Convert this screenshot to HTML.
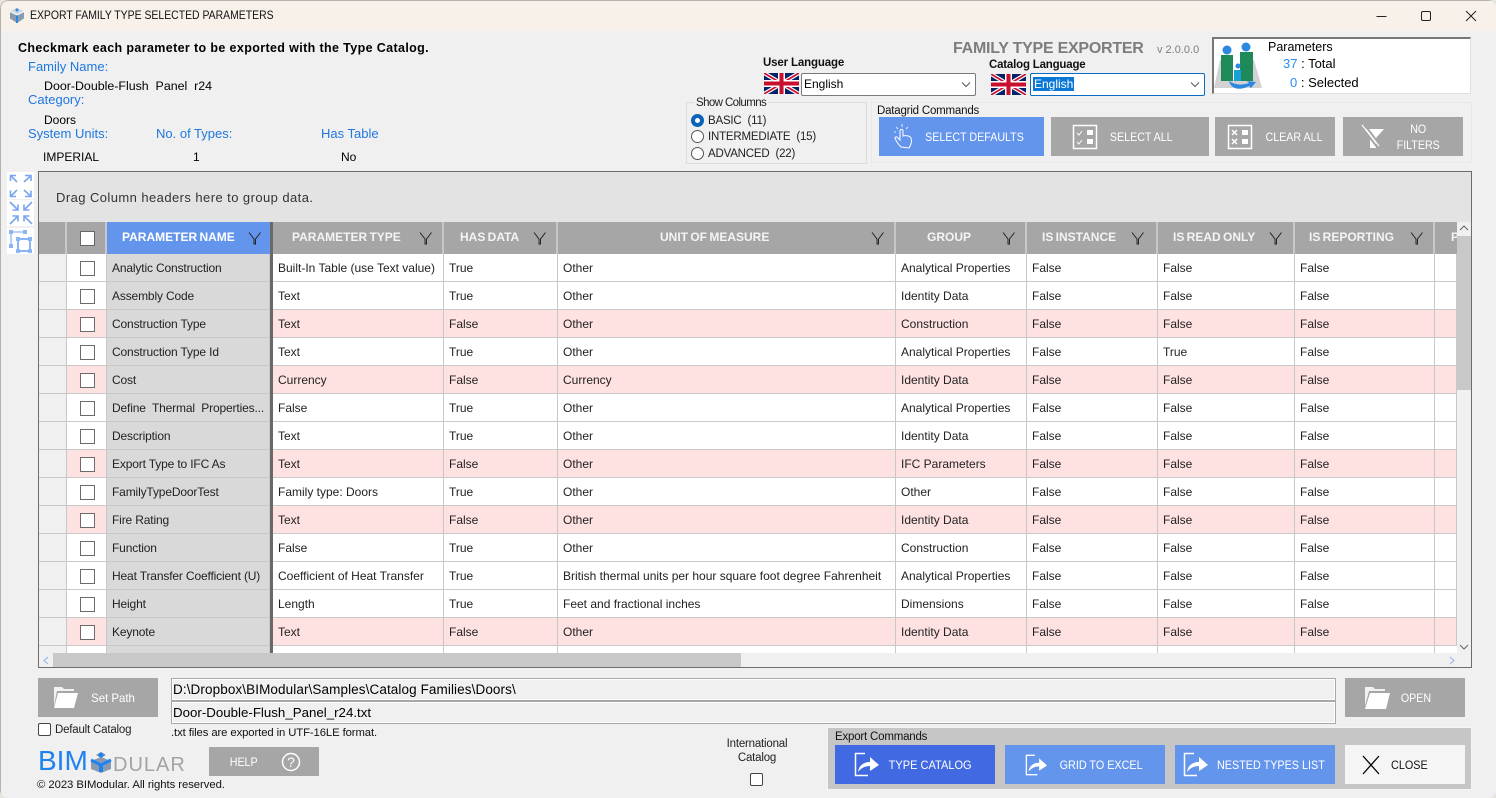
<!DOCTYPE html>
<html><head><meta charset="utf-8"><title>Export Family Type</title>
<style>
*{box-sizing:border-box}
html,body{margin:0;padding:0;width:1496px;height:798px;overflow:hidden;background:#e8e4df}
body{font-family:"Liberation Sans",sans-serif;font-size:12px;color:#000}
.a{position:absolute;white-space:nowrap}
#win{position:absolute;left:0;top:0;width:1496px;height:798px;background:#f0f0f0;border-radius:8px;overflow:hidden}
#win::after{content:"";position:absolute;left:0;top:0;width:1496px;height:798px;border:1px solid #b5b2ae;border-radius:8px;pointer-events:none}
#tb{position:absolute;left:0;top:0;width:1496px;height:31px;background:#f8f1ea}
.blue{color:#1e78e0;font-size:13px}
.btn{position:absolute;background:#a6a6a6;color:#fff;font-size:12px;display:flex;align-items:center;justify-content:center;text-align:center;line-height:16px}
.btn span{display:inline-block;transform:scaleX(.89);white-space:nowrap}
.btn svg{position:absolute}
.bl{background:#6495ed}
.row{position:absolute;left:39px;height:28px;width:1418px;border-bottom:1px solid #c8c8c8;background:#fff;font-size:12px;color:#222}
.row.p{background:#fee1e1}
.c{position:absolute;top:0;height:27px;line-height:29px;padding-left:5px;border-right:1px solid #c8c8c8;white-space:nowrap;overflow:hidden}
.i0{left:0;width:28px;background:#f0f0f0;padding:0}
.i1{left:28px;width:40px;padding:0}
.n{left:68px;width:163px;background:#d9d9d9;letter-spacing:-.15px}
.t{left:234px;width:171px}.d{left:405px;width:114px}.u{left:519px;width:338px}.g{left:857px;width:131px}.s{left:988px;width:131px}.r{left:1119px;width:137px}.e{left:1256px;width:140px}.x{left:1396px;width:22px}
.sep{position:absolute;left:231px;top:0;width:3px;height:28px;background:#696969}
.cb{position:absolute;left:13px;top:7px;width:15px;height:15px;border:1px solid #6b6b6b;background:#fff}
.h{position:absolute;top:222px;height:32px;background:#a6a6a6;color:#f4f4f4;font-weight:bold;font-size:12px;line-height:31px;text-align:center;border-right:2px solid #c8c8c8;word-spacing:-1px;overflow:hidden;white-space:nowrap}
.h svg{position:absolute;top:9px}
.field{position:absolute;left:171px;width:1165px;height:23px;border:1px solid #a8a8a8;background:#f0f0f0;font-size:13.500px;line-height:22px;padding-left:1px;box-shadow:inset 0 0 0 1px #fff}
.combo{position:absolute;height:23px;background:#fff;border:1px solid #7a7a7a;border-radius:2px;font-size:12px;line-height:21px;padding-left:2px}
.radio{position:absolute;left:691px;width:13px;height:13px;border:1px solid #555;border-radius:50%;background:#fff}
.small{font-size:11.500px;letter-spacing:-.2px}
</style></head><body>
<div id="win">
<div id="tb"></div>

<svg class="a" style="left:9px;top:8px" width="16" height="15" viewBox="0 0 16 15"><path d="M8 0l7 3.500v7L8 15l-7-4.500v-7z" fill="#8a9bb0"/><path d="M8 0l7 3.500L8 7 1 3.500z" fill="#cfd8e3"/><path d="M8 7v8" stroke="#2a88e0" stroke-width="2"/><path d="M1 3.500l7 3.500 7-3.500" fill="none" stroke="#fff"/><circle cx="8" cy="2" r="1.500" fill="#2a88e0"/></svg>
<div class="a" style="left:30px;top:9px;font-size:11.700px;color:#111;transform:scaleX(.893);transform-origin:left">EXPORT FAMILY TYPE SELECTED PARAMETERS</div>
<svg class="a" style="left:1370px;top:8px" width="110" height="16" viewBox="0 0 110 16" fill="none" stroke="#222" stroke-width="1"><path d="M6.500 8.500h10"/><rect x="51.500" y="3.500" width="9" height="9" rx="1.500"/><path d="M96 3l10 10M106 3L96 13"/></svg>

<div class="a" style="left:18px;top:41px;font-weight:bold;font-size:12.500px;letter-spacing:.37px">Checkmark each parameter to be exported with the Type Catalog.</div>
<div class="a blue" style="left:28px;top:59px">Family Name:</div>
<div class="a" style="left:44px;top:79px;font-size:12.400px">Door-Double-Flush&nbsp; Panel&nbsp; r24</div>
<div class="a blue" style="left:28px;top:92px">Category:</div>
<div class="a" style="left:44px;top:113px;font-size:12px">Doors</div>
<div class="a blue" style="left:28px;top:126px">System Units:</div>
<div class="a blue" style="left:156px;top:126px">No. of Types:</div>
<div class="a blue" style="left:321px;top:126px">Has Table</div>
<div class="a" style="left:43px;top:150px">IMPERIAL</div>
<div class="a" style="left:193px;top:150px">1</div>
<div class="a" style="left:341px;top:150px">No</div>

<div class="a" style="left:953px;top:40px;font-size:16px;font-weight:bold;color:#7d7d7d;letter-spacing:-.25px">FAMILY TYPE EXPORTER</div>
<div class="a" style="left:1157px;top:44px;font-size:11px;color:#7d7d7d">v 2.0.0.0</div>

<div class="a" style="left:763px;top:57px;font-weight:bold;font-size:11.500px;color:#111;letter-spacing:-.15px">User Language</div>
<div class="a" style="left:989px;top:59px;font-weight:bold;font-size:11.500px;color:#111;letter-spacing:-.2px">Catalog Language</div>
<svg class="a" style="left:764px;top:73px" width="35" height="21" viewBox="0 0 60 36"><rect width="60" height="36" fill="#012169"/><path d="M0 0l60 36M60 0L0 36" stroke="#fff" stroke-width="7"/><path d="M0 0l60 36M60 0L0 36" stroke="#c8102e" stroke-width="3"/><path d="M30 0v36M0 18h60" stroke="#fff" stroke-width="12"/><path d="M30 0v36M0 18h60" stroke="#c8102e" stroke-width="7"/></svg>
<svg class="a" style="left:991px;top:74px" width="35" height="21" viewBox="0 0 60 36"><rect width="60" height="36" fill="#012169"/><path d="M0 0l60 36M60 0L0 36" stroke="#fff" stroke-width="7"/><path d="M0 0l60 36M60 0L0 36" stroke="#c8102e" stroke-width="3"/><path d="M30 0v36M0 18h60" stroke="#fff" stroke-width="12"/><path d="M30 0v36M0 18h60" stroke="#c8102e" stroke-width="7"/></svg>
<div class="combo" style="left:801px;top:73px;width:175px">English<svg class="a" style="right:4px;top:8px" width="10" height="6" viewBox="0 0 10 6" fill="none" stroke="#555"><path d="M1 .5l4 4 4-4"/></svg></div>
<div class="combo" style="left:1030px;top:73px;width:175px;border-color:#0a6cc4"><span style="background:#0a78d7;color:#fff;padding:0 1px">English</span><svg class="a" style="right:4px;top:8px" width="10" height="6" viewBox="0 0 10 6" fill="none" stroke="#555"><path d="M1 .5l4 4 4-4"/></svg></div>

<div class="a" style="left:1212px;top:37px;width:259px;height:57px;background:#fff;border:1px solid #e0e0e0;border-top:2px solid #777;border-left:2px solid #777"></div>
<svg class="a" style="left:1213px;top:40px" width="50" height="52" viewBox="0 0 50 52"><path d="M1 48L7 20h34l8 28z" fill="#d2d2d2"/><rect x="8" y="15" width="12" height="26" fill="#1e8a5a"/><rect x="27" y="12" width="13" height="29" fill="#1e8a5a"/><circle cx="14" cy="10" r="4.500" fill="#2a88e0"/><circle cx="33" cy="7" r="4.500" fill="#2a88e0"/><path d="M20 20h7v20h-7z" fill="#fff"/><circle cx="25" cy="26" r="2.500" fill="#2a88e0"/><rect x="21" y="30" width="7" height="11" fill="#1aa0d8"/><path d="M16 41q9 6 20 2l-2-2 9 1-5 6-2-2q-10 5-16 1-3-2-4-6z" fill="#2a88e0"/></svg>
<div class="a" style="left:1268px;top:40px;font-size:12.500px">Parameters</div>
<div class="a" style="left:1283px;top:56px;font-size:13px"><span style="color:#2a8cf0">37</span> : Total</div>
<div class="a" style="left:1290px;top:75px;font-size:13px"><span style="color:#2a8cf0">0</span> : Selected</div>

<div class="a" style="left:686px;top:102px;width:181px;height:62px;border:1px solid #dcdcdc"></div>
<div class="a small" style="left:694px;top:97px;background:#f0f0f0;padding:0 2px;color:#222;letter-spacing:-.6px">Show Columns</div>
<div class="radio" style="top:114px;border:4px solid #0a63b8;background:#fff"></div>
<div class="radio" style="top:130px"></div>
<div class="radio" style="top:147px"></div>
<div class="a small" style="left:708px;top:115px;color:#222">BASIC&nbsp; (11)</div>
<div class="a small" style="left:708px;top:131px;color:#222">INTERMEDIATE&nbsp; (15)</div>
<div class="a small" style="left:708px;top:148px;color:#222">ADVANCED&nbsp; (22)</div>

<div class="a" style="left:871px;top:102px;width:601px;height:61px;border:1px solid #e8e8e8"></div>
<div class="a small" style="left:877px;top:105px;color:#111">Datagrid Commands</div>

<div class="btn bl" style="left:879px;top:117px;width:165px;height:39px"><span style="margin-left:26px">SELECT DEFAULTS</span>
<svg style="left:13px;top:6px" width="24" height="28" viewBox="0 0 24 28" fill="none" stroke="#fff" stroke-width="1"><path d="M9 24c-3-3-5-6-6-9 0-1 2-2 3 0l2 2V8c0-2 3-2 3 0v5c3-1 7 0 8 2 1 3 0 7-2 10z"/><path d="M6 6L4 4M10 4V1M14 6l2-2M4 9H2" opacity=".8"/></svg></div>
<div class="btn" style="left:1051px;top:117px;width:158px;height:39px"><span style="margin-left:22px">SELECT ALL</span>
<svg style="left:21px;top:7px" width="26" height="26" viewBox="0 0 26 26" fill="none" stroke="#fff"><rect x="1.500" y="1.500" width="23" height="23" stroke-width="1.500"/><rect x="15" y="6" width="6" height="5" fill="#fff" stroke="none"/><rect x="15" y="15" width="6" height="5" fill="#fff" stroke="none"/><path d="M5 9l2 2 3-4M5 18l2 2 3-4"/></svg></div>
<div class="btn" style="left:1215px;top:117px;width:120px;height:39px"><span style="margin-left:38px">CLEAR ALL</span>
<svg style="left:12px;top:7px" width="26" height="26" viewBox="0 0 26 26" fill="none" stroke="#fff"><rect x="1.500" y="1.500" width="23" height="23" stroke-width="1.500"/><rect x="15" y="6" width="6" height="5" fill="#fff" stroke="none"/><rect x="15" y="15" width="6" height="5" fill="#fff" stroke="none"/><path d="M5 6l5 5M10 6l-5 5M5 15l5 5M10 15l-5 5" stroke-width="1.500"/></svg></div>
<div class="btn" style="left:1343px;top:117px;width:120px;height:39px"><span style="margin-left:30px">NO<br>FILTERS</span>
<svg style="left:18px;top:7px" width="24" height="25" viewBox="0 0 24 25"><path d="M1 5h22l-8 9v10h-6V14z" fill="#fff"/><path d="M3 0l16 21M0 2l16 21" stroke="#a6a6a6" stroke-width="2"/><path d="M1 1l17 21" stroke="#fff" stroke-width="1.200"/></svg></div>

<div class="a" style="left:7px;top:172px;width:27px;height:27px;background:#fff"></div>
<div class="a" style="left:7px;top:200px;width:27px;height:26px;background:#fff"></div>
<div class="a" style="left:7px;top:228px;width:27px;height:26px;background:#fff"></div>
<svg class="a" style="left:9px;top:174px" width="24" height="24" viewBox="0 0 24 24" fill="none" stroke="#7aa5f0" stroke-width="1.600"><path d="M1.500 7V1.500H7M1.500 1.500L8 8M16 1.500h6v5.500M22 1.500L15 8M1.500 16.500v6H7M1.500 22.500L8 16M22 16.500v6h-6M22 22.500L15 16"/></svg>
<svg class="a" style="left:9px;top:201px" width="24" height="24" viewBox="0 0 24 24" fill="none" stroke="#7aa5f0" stroke-width="1.600"><path d="M1 1l8 8M9 3.500V9H3.500M23 1l-8 8M15 3.500V9h5.500M1 23l8-8M9 20.500V15H3.500M23 23l-8-8M15 20.500V15h5.500"/></svg>
<svg class="a" style="left:8px;top:229px" width="25" height="25" viewBox="0 0 25 25" fill="none" stroke="#8cb6f2" stroke-width="1.300"><rect x="10" y="10" width="12" height="12" stroke-width="2"/><path d="M3 3v15M3 3h14"/><g fill="#8cb6f2" stroke="none"><rect x="1" y="1" width="4" height="4"/><rect x="15" y="1" width="4" height="4"/><rect x="1" y="15" width="4" height="4"/><rect x="8" y="8" width="4" height="4"/><rect x="20" y="8" width="4" height="4"/><rect x="8" y="20" width="4" height="4"/><rect x="20" y="20" width="4" height="4"/></g></svg>

<!-- Grid -->
<div class="a" style="left:38px;top:171px;width:1434px;height:497px;background:#fff;border:1px solid #6d6d6d;overflow:hidden"></div>
<div class="a" style="left:39px;top:172px;width:1432px;height:50px;background:#e3e3e3"></div>
<div class="a" style="left:56px;top:190px;font-size:13px;color:#333;letter-spacing:.43px">Drag Column headers here to group data.</div>

<div class="h" style="left:39px;width:28px"></div>
<div class="h" style="left:67px;width:40px"><div style="position:absolute;left:13px;top:9px;width:15px;height:15px;background:#fff;border:1px solid #666"></div></div>
<div class="h" style="left:107px;width:163px;background:#6495ed;border:0;text-align:left;padding-left:15px;color:#fff">PARAMETER NAME<svg style="left:141px" width="14" height="14" viewBox="0 0 14 14" fill="none" stroke="#222"><path d="M1 1.500l5 6.500v5h1.500V8l5-6.500" /></svg></div>
<div class="a" style="left:270px;top:222px;width:3px;height:32px;background:#696969"></div>
<div class="h" style="left:273px;width:171px;text-align:left;padding-left:19px">PARAMETER TYPE<svg style="left:146px" width="14" height="14" viewBox="0 0 14 14" fill="none" stroke="#222"><path d="M1 1.500l5 6.500v5h1.500V8l5-6.500"/></svg></div>
<div class="h" style="left:444px;width:114px;text-align:left;padding-left:16px">HAS DATA<svg style="left:89px" width="14" height="14" viewBox="0 0 14 14" fill="none" stroke="#222"><path d="M1 1.500l5 6.500v5h1.500V8l5-6.500"/></svg></div>
<div class="h" style="left:558px;width:338px;text-align:left;padding-left:102px">UNIT OF MEASURE<svg style="left:313px" width="14" height="14" viewBox="0 0 14 14" fill="none" stroke="#222"><path d="M1 1.500l5 6.500v5h1.500V8l5-6.500"/></svg></div>
<div class="h" style="left:896px;width:131px;text-align:left;padding-left:31px">GROUP<svg style="left:106px" width="14" height="14" viewBox="0 0 14 14" fill="none" stroke="#222"><path d="M1 1.500l5 6.500v5h1.500V8l5-6.500"/></svg></div>
<div class="h" style="left:1027px;width:131px;text-align:left;padding-left:15px">IS INSTANCE<svg style="left:104px" width="14" height="14" viewBox="0 0 14 14" fill="none" stroke="#222"><path d="M1 1.500l5 6.500v5h1.500V8l5-6.500"/></svg></div>
<div class="h" style="left:1158px;width:137px;text-align:left;padding-left:15px">IS READ ONLY<svg style="left:111px" width="14" height="14" viewBox="0 0 14 14" fill="none" stroke="#222"><path d="M1 1.500l5 6.500v5h1.500V8l5-6.500"/></svg></div>
<div class="h" style="left:1295px;width:140px;text-align:left;padding-left:14px">IS REPORTING<svg style="left:115px" width="14" height="14" viewBox="0 0 14 14" fill="none" stroke="#222"><path d="M1 1.500l5 6.500v5h1.500V8l5-6.500"/></svg></div>
<div class="h" style="left:1435px;width:22px;border:0;text-align:left;padding-left:16px">P</div>

<div class="row" style="top:254px"><div class="c i0"></div><div class="c i1"><div class="cb"></div></div><div class="c n">Analytic Construction</div><div class="sep"></div><div class="c t">Built-In Table (use Text value)</div><div class="c d">True</div><div class="c u">Other</div><div class="c g">Analytical Properties</div><div class="c s">False</div><div class="c r">False</div><div class="c e">False</div><div class="c x"></div></div>
<div class="row" style="top:282px"><div class="c i0"></div><div class="c i1"><div class="cb"></div></div><div class="c n">Assembly Code</div><div class="sep"></div><div class="c t">Text</div><div class="c d">True</div><div class="c u">Other</div><div class="c g">Identity Data</div><div class="c s">False</div><div class="c r">False</div><div class="c e">False</div><div class="c x"></div></div>
<div class="row p" style="top:310px"><div class="c i0"></div><div class="c i1"><div class="cb"></div></div><div class="c n">Construction Type</div><div class="sep"></div><div class="c t">Text</div><div class="c d">False</div><div class="c u">Other</div><div class="c g">Construction</div><div class="c s">False</div><div class="c r">False</div><div class="c e">False</div><div class="c x"></div></div>
<div class="row" style="top:338px"><div class="c i0"></div><div class="c i1"><div class="cb"></div></div><div class="c n">Construction Type Id</div><div class="sep"></div><div class="c t">Text</div><div class="c d">True</div><div class="c u">Other</div><div class="c g">Analytical Properties</div><div class="c s">False</div><div class="c r">True</div><div class="c e">False</div><div class="c x"></div></div>
<div class="row p" style="top:366px"><div class="c i0"></div><div class="c i1"><div class="cb"></div></div><div class="c n">Cost</div><div class="sep"></div><div class="c t">Currency</div><div class="c d">False</div><div class="c u">Currency</div><div class="c g">Identity Data</div><div class="c s">False</div><div class="c r">False</div><div class="c e">False</div><div class="c x"></div></div>
<div class="row" style="top:394px"><div class="c i0"></div><div class="c i1"><div class="cb"></div></div><div class="c n">Define&nbsp; Thermal&nbsp; Properties...</div><div class="sep"></div><div class="c t">False</div><div class="c d">True</div><div class="c u">Other</div><div class="c g">Analytical Properties</div><div class="c s">False</div><div class="c r">False</div><div class="c e">False</div><div class="c x"></div></div>
<div class="row" style="top:422px"><div class="c i0"></div><div class="c i1"><div class="cb"></div></div><div class="c n">Description</div><div class="sep"></div><div class="c t">Text</div><div class="c d">True</div><div class="c u">Other</div><div class="c g">Identity Data</div><div class="c s">False</div><div class="c r">False</div><div class="c e">False</div><div class="c x"></div></div>
<div class="row p" style="top:450px"><div class="c i0"></div><div class="c i1"><div class="cb"></div></div><div class="c n">Export Type to IFC As</div><div class="sep"></div><div class="c t">Text</div><div class="c d">False</div><div class="c u">Other</div><div class="c g">IFC Parameters</div><div class="c s">False</div><div class="c r">False</div><div class="c e">False</div><div class="c x"></div></div>
<div class="row" style="top:478px"><div class="c i0"></div><div class="c i1"><div class="cb"></div></div><div class="c n">FamilyTypeDoorTest</div><div class="sep"></div><div class="c t">Family type: Doors</div><div class="c d">True</div><div class="c u">Other</div><div class="c g">Other</div><div class="c s">False</div><div class="c r">False</div><div class="c e">False</div><div class="c x"></div></div>
<div class="row p" style="top:506px"><div class="c i0"></div><div class="c i1"><div class="cb"></div></div><div class="c n">Fire Rating</div><div class="sep"></div><div class="c t">Text</div><div class="c d">False</div><div class="c u">Other</div><div class="c g">Identity Data</div><div class="c s">False</div><div class="c r">False</div><div class="c e">False</div><div class="c x"></div></div>
<div class="row" style="top:534px"><div class="c i0"></div><div class="c i1"><div class="cb"></div></div><div class="c n">Function</div><div class="sep"></div><div class="c t">False</div><div class="c d">True</div><div class="c u">Other</div><div class="c g">Construction</div><div class="c s">False</div><div class="c r">False</div><div class="c e">False</div><div class="c x"></div></div>
<div class="row" style="top:562px"><div class="c i0"></div><div class="c i1"><div class="cb"></div></div><div class="c n">Heat Transfer Coefficient (U)</div><div class="sep"></div><div class="c t">Coefficient of Heat Transfer</div><div class="c d">True</div><div class="c u">British thermal units per hour square foot degree Fahrenheit</div><div class="c g">Analytical Properties</div><div class="c s">False</div><div class="c r">False</div><div class="c e">False</div><div class="c x"></div></div>
<div class="row" style="top:590px"><div class="c i0"></div><div class="c i1"><div class="cb"></div></div><div class="c n">Height</div><div class="sep"></div><div class="c t">Length</div><div class="c d">True</div><div class="c u">Feet and fractional inches</div><div class="c g">Dimensions</div><div class="c s">False</div><div class="c r">False</div><div class="c e">False</div><div class="c x"></div></div>
<div class="row p" style="top:618px"><div class="c i0"></div><div class="c i1"><div class="cb"></div></div><div class="c n">Keynote</div><div class="sep"></div><div class="c t">Text</div><div class="c d">False</div><div class="c u">Other</div><div class="c g">Identity Data</div><div class="c s">False</div><div class="c r">False</div><div class="c e">False</div><div class="c x"></div></div>
<div class="row" style="top:646px;height:7px;border:0;overflow:hidden"><div class="c i0"></div><div class="c i1"></div><div class="c n"></div><div class="sep"></div><div class="c t"></div><div class="c d"></div><div class="c u"></div><div class="c g"></div><div class="c s"></div><div class="c r"></div><div class="c e"></div></div>

<!-- scrollbars -->
<div class="a" style="left:1457px;top:222px;width:14px;height:431px;background:#f0f0f0"></div>
<div class="a" style="left:1457px;top:236px;width:14px;height:154px;background:#c8c8c8"></div>
<svg class="a" style="left:1459px;top:225px" width="10" height="6" viewBox="0 0 10 6" fill="none" stroke="#666"><path d="M1 5l4-4 4 4"/></svg>
<svg class="a" style="left:1459px;top:644px" width="10" height="6" viewBox="0 0 10 6" fill="none" stroke="#666"><path d="M1 1l4 4 4-4"/></svg>
<div class="a" style="left:39px;top:653px;width:1432px;height:14px;background:#f0f0f0"></div>
<div class="a" style="left:53px;top:653px;width:688px;height:14px;background:#c8c8c8"></div>
<svg class="a" style="left:43px;top:656px" width="6" height="9" viewBox="0 0 6 9" fill="none" stroke="#8fb0ee"><path d="M5 1L1 4.500 5 8"/></svg>
<svg class="a" style="left:1449px;top:656px" width="6" height="9" viewBox="0 0 6 9" fill="none" stroke="#8fb0ee"><path d="M1 1l4 3.500L1 8"/></svg>

<!-- bottom -->
<div class="btn" style="left:38px;top:678px;width:120px;height:39px"><span style="margin-left:30px;transform:scaleX(.95)">Set Path</span>
<svg style="left:14px;top:8px" width="27" height="23" viewBox="0 0 27 23" fill="#fff"><path d="M2 1h8l2 2h10v2H5L2 20z" opacity=".85"/><path d="M6 7h20l-4 15H2z"/></svg></div>
<div class="a" style="left:38px;top:723px;width:13px;height:13px;border:1px solid #444;border-radius:2px;background:#fff"></div>
<div class="a small" style="left:55px;top:724px;color:#222">Default Catalog</div>
<div class="field" style="top:678px;letter-spacing:.1px">D:\Dropbox\BIModular\Samples\Catalog Families\Doors\</div>
<div class="field" style="top:701px;font-size:13.300px">Door-Double-Flush_Panel_r24.txt</div>
<div class="a small" style="left:171px;top:727px;font-size:11.300px;color:#111;letter-spacing:-.1px">.txt files are exported in UTF-16LE format.</div>

<div class="a" style="left:38px;top:745px;font-size:28px;color:#1e82f0;line-height:32px">BIM</div>
<svg class="a" style="left:90px;top:751px" width="22" height="22" viewBox="0 0 22 22"><path d="M11 6l10 4v8l-10 4-10-4v-8z" fill="#8a9bb0"/><path d="M6 4l5-3 5 3-5 3z" fill="#7f93ab"/><path d="M1 9l10 5 10-5" fill="none" stroke="#1e82f0" stroke-width="3"/><path d="M11 13v8" stroke="#1e82f0" stroke-width="4"/><circle cx="11" cy="4" r="2.500" fill="#1e82f0"/></svg>
<div class="a" style="left:113px;top:752px;font-size:20px;letter-spacing:1px;color:#a3a3a3;line-height:26px">DULAR</div>
<div class="a small" style="left:37px;top:779px;color:#111;font-size:11.300px;letter-spacing:-.05px">© 2023 BIModular. All rights reserved.</div>

<div class="btn" style="left:209px;top:747px;width:110px;height:29px;justify-content:flex-start;padding-left:19px"><span>HELP</span>
<svg style="left:72px;top:5px" width="20" height="20" viewBox="0 0 20 20"><circle cx="10" cy="10" r="8.500" fill="none" stroke="#fff" stroke-width="1.500"/><text x="10" y="15" text-anchor="middle" fill="#fff" font-size="14" font-family="Liberation Sans">?</text></svg></div>

<div class="a small" style="left:726px;top:737px;color:#222;text-align:center;width:62px;line-height:14px">International<br>Catalog</div>
<div class="a" style="left:750px;top:773px;width:13px;height:13px;border:1px solid #444;border-radius:2px;background:#fff"></div>

<div class="a" style="left:827px;top:727px;width:645px;height:63px;background:#c6c6c6;border:1px solid #f4f4f4"></div>
<div class="a small" style="left:835px;top:731px;color:#111">Export Commands</div>
<div class="btn" style="left:835px;top:745px;width:160px;height:39px;background:#4169e1"><span style="margin-left:31px;transform:scaleX(.92)">TYPE CATALOG</span><svg style="left:19px;top:7px" width="26" height="25" viewBox="0 0 26 25" fill="none" stroke="#fff"><path d="M11 1.500H1.500v22H14" stroke-width="1.500"/><path d="M4 20c1-7 6-10 12-10V5l9 8-9 6v-5c-5 0-9 2-12 6z" fill="#fff" stroke="none"/></svg></div>
<div class="btn bl" style="left:1005px;top:745px;width:160px;height:39px"><span style="margin-left:33px;transform:scaleX(.9)">GRID TO EXCEL</span><svg style="left:20px;top:9px" width="23" height="22" viewBox="0 0 26 25" fill="none" stroke="#fff"><path d="M11 1.500H1.500v22H14" stroke-width="1.500"/><path d="M4 20c1-7 6-10 12-10V5l9 8-9 6v-5c-5 0-9 2-12 6z" fill="#fff" stroke="none"/></svg></div>
<div class="btn bl" style="left:1175px;top:745px;width:160px;height:39px"><span style="margin-left:32px;transform:scaleX(.9)">NESTED TYPES LIST</span><svg style="left:8px;top:7px" width="26" height="25" viewBox="0 0 26 25" fill="none" stroke="#fff"><path d="M11 1.500H1.500v22H14" stroke-width="1.500"/><path d="M4 20c1-7 6-10 12-10V5l9 8-9 6v-5c-5 0-9 2-12 6z" fill="#fff" stroke="none"/></svg></div>
<div class="btn" style="left:1345px;top:745px;width:120px;height:39px;background:#f5f5f5;color:#111"><span style="margin-left:8px;transform:scaleX(.9)">CLOSE</span><svg style="left:16px;top:10px" width="20" height="20" viewBox="0 0 20 20" fill="none" stroke="#000" stroke-width="1.300"><path d="M2 1l16 18M18 1L2 19"/></svg></div>

<div class="btn" style="left:1345px;top:678px;width:120px;height:39px"><span style="margin-left:23px">OPEN</span>
<svg style="left:19px;top:8px" width="27" height="24" viewBox="0 0 27 24" fill="#fff"><path d="M1 1h8l2 2h10v2H5L1 20z" opacity=".85"/><path d="M6 7h20l-4 16H1z"/></svg></div>
</div>
</body></html>
